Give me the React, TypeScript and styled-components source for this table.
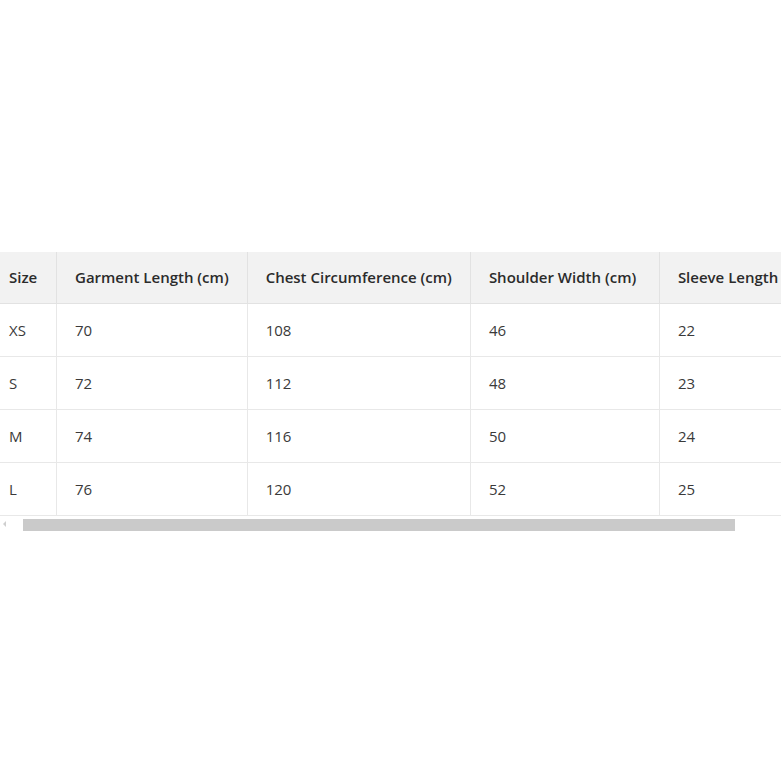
import React, { useEffect, useRef, useState } from "react";
import styled, { createGlobalStyle } from "styled-components";

const GlobalStyle = createGlobalStyle`
  html, body { margin: 0; padding: 0; background: #fff; overflow: hidden; }
  body { font-family: "Open Sans", "Noto Sans", Arial, sans-serif; }
`;

const Page = styled.div`
  min-height: 782px;
  display: flex;
  flex-direction: column;
  justify-content: center;
`;

const ScrollBox = styled.div`
  width: 781px;
  overflow-x: auto;
  overflow-y: hidden;
  scrollbar-width: none;
  &::-webkit-scrollbar { display: none; }
`;

const Table = styled.table`
  border-collapse: collapse;
  white-space: nowrap;
  font-size: 15px;
  color: #333;
`;

const HeadCell = styled.th<{ $w?: number }>`
  background: #f2f2f2;
  font-weight: 600;
  text-align: left;
  padding: 15px 18px;
  line-height: 21px;
  color: #2b2b2b;
  border-left: 1px solid #e2e2e2;
  border-bottom: 1px solid #e2e2e2;
  min-width: ${(p) => (p.$w ? `${p.$w}px` : "0")};
  &:first-child { border-left: none; }
`;

const Cell = styled.td`
  padding: 16px 18px;
  line-height: 20px;
  color: #3a3a3a;
  border-left: 1px solid #e8e8e8;
  border-bottom: 1px solid #e8e8e8;
  &:first-child { border-left: none; }
`;

const Bar = styled.div`
  display: flex;
  align-items: stretch;
  height: 13px;
  margin-top: 2px;
`;

const ArrowButton = styled.div`
  width: 15px;
  flex: none;
  display: flex;
  align-items: center;
  justify-content: center;
  padding-right: 6px;
  box-sizing: border-box;
  &::before {
    content: "";
    width: 0;
    height: 0;
    border-top: 3px solid transparent;
    border-bottom: 3px solid transparent;
    border-right: 3px solid #cfcfcf;
  }
`;

const Track = styled.div`
  position: relative;
  flex: 1;
`;

const Thumb = styled.div`
  position: absolute;
  top: 1px;
  bottom: 0;
  background: #cacaca;
`;

const headers: { label: string; w?: number }[] = [
  { label: "Size", w: 29 },
  { label: "Garment Length (cm)" },
  { label: "Chest Circumference (cm)" },
  { label: "Shoulder Width (cm)", w: 152 },
  { label: "Sleeve Length (cm)" },
];

const rows = [
  ["XS", "70", "108", "46", "22"],
  ["S", "72", "112", "48", "23"],
  ["M", "74", "116", "50", "24"],
  ["L", "76", "120", "52", "25"],
];

export default function App() {
  const ref = useRef<HTMLDivElement>(null);
  const [thumb, setThumb] = useState({ left: 1, width: 93 });
  const update = () => {
    const el = ref.current;
    if (!el) return;
    setThumb({
      left: (el.scrollLeft / el.scrollWidth) * 100,
      width: (el.clientWidth / el.scrollWidth) * 100,
    });
  };
  useEffect(() => {
    if (ref.current) ref.current.scrollLeft = 9;
    update();
  }, []);
  return (
    <>
      <GlobalStyle />
      <Page>
        <ScrollBox ref={ref} onScroll={update}>
          <Table>
            <thead>
              <tr>
                {headers.map((h) => (
                  <HeadCell key={h.label} $w={h.w}>
                    {h.label}
                  </HeadCell>
                ))}
              </tr>
            </thead>
            <tbody>
              {rows.map((r) => (
                <tr key={r[0]}>
                  {r.map((c, i) => (
                    <Cell key={i}>{c}</Cell>
                  ))}
                </tr>
              ))}
            </tbody>
          </Table>
        </ScrollBox>
        <Bar>
          <ArrowButton />
          <Track>
            <Thumb style={{ left: `${thumb.left}%`, width: `${thumb.width}%` }} />
          </Track>
        </Bar>
      </Page>
    </>
  );
}
